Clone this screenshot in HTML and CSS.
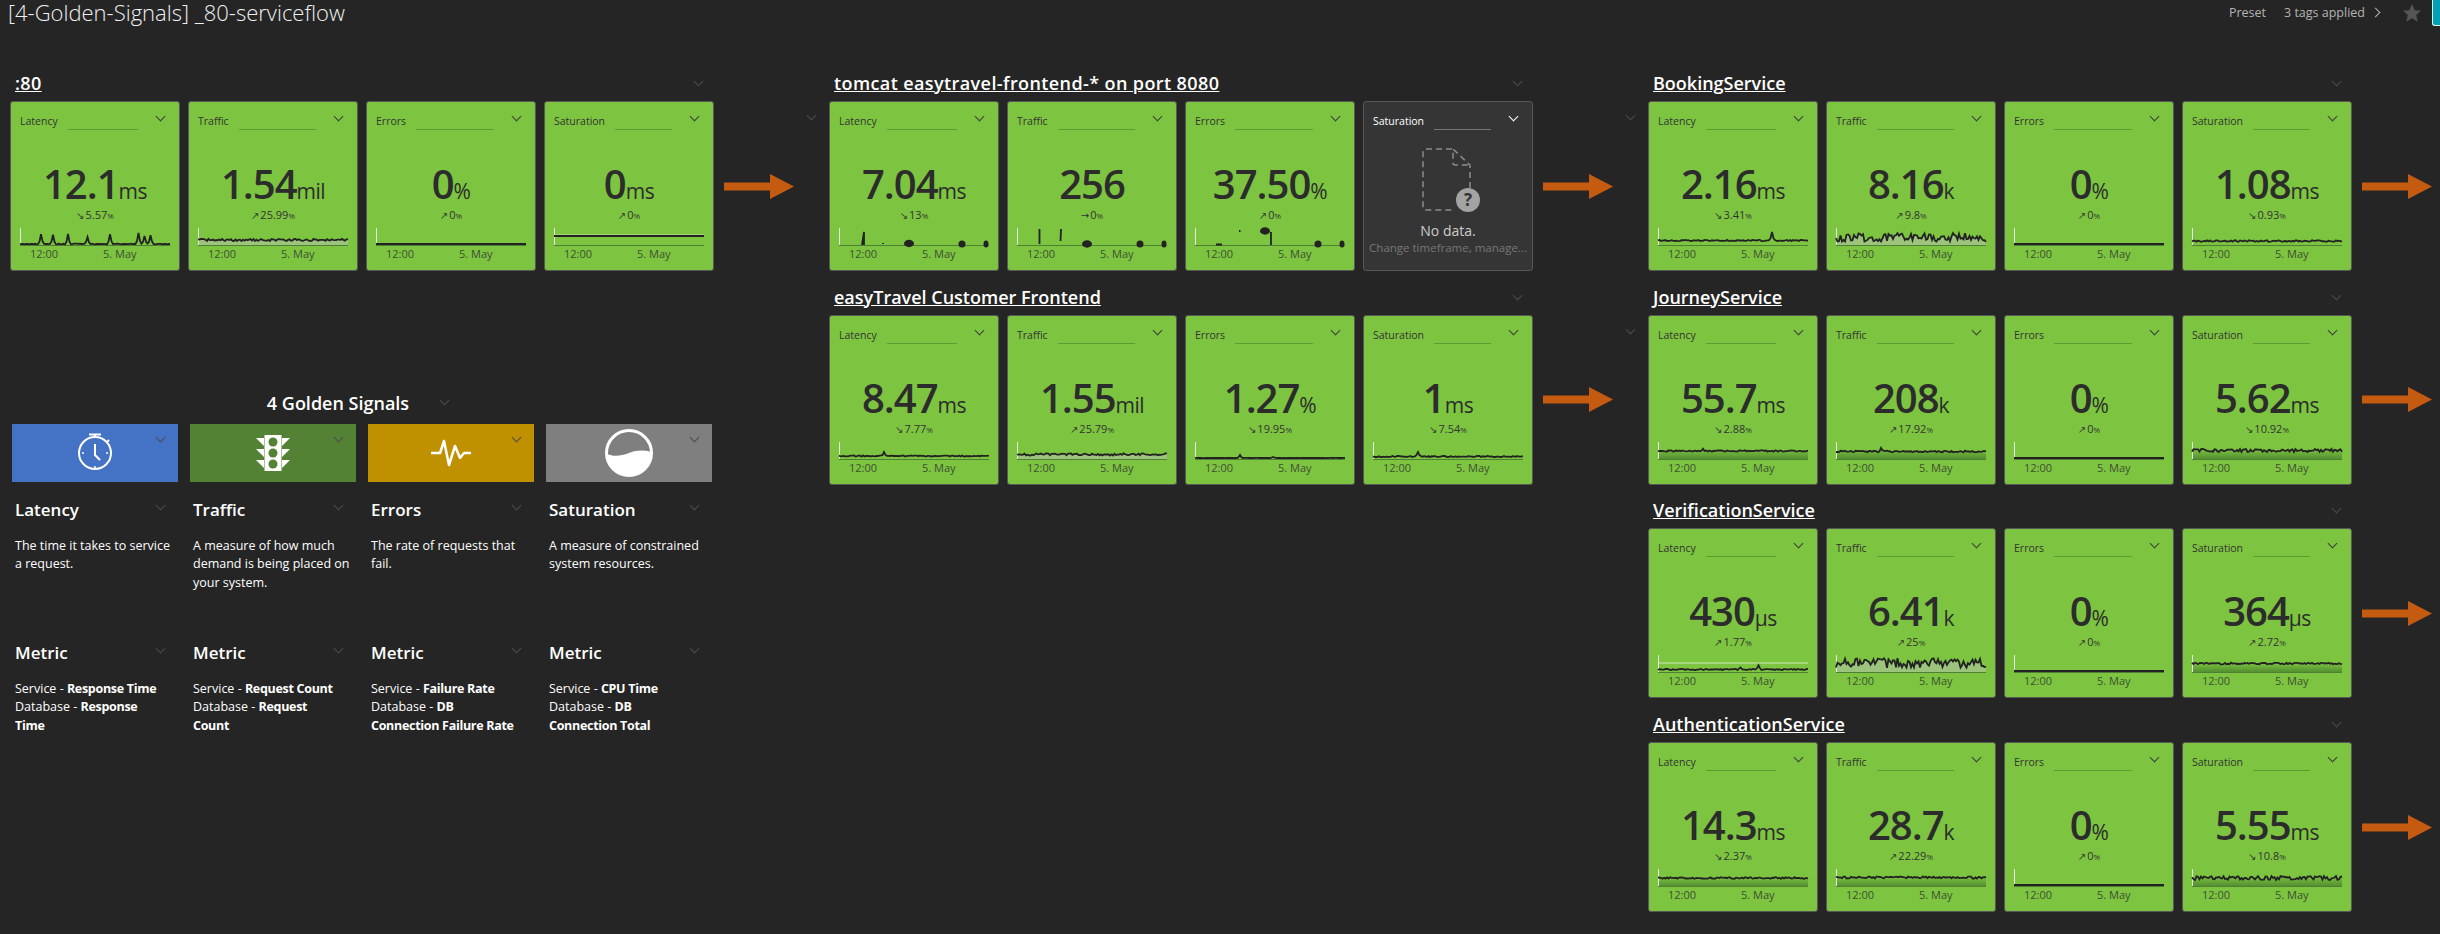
FILE: index.html
```html
<!DOCTYPE html>
<html lang="en">
<head>
    <meta charset="UTF-8">
    <title>[4-Golden-Signals] _80-serviceflow</title>
    <link rel="stylesheet" href="styles.css">
</head>
<body>
    <svg class="defs" width="0" height="0">
        <linearGradient id="shade" x1="0" y1="0" x2="0" y2="1">
            <stop offset="0" stop-color="#7dc540"/>
            <stop offset="1" stop-color="#4f8a30"/>
        </linearGradient>
    </svg>

    <div class="topbar">
        <div class="page-title">[4-Golden-Signals] _80-serviceflow</div>
        <div class="top-right">
            <span>Preset</span>
            <span class="tags">3 tags applied</span>
            <span class="chev-right"></span>
            <svg class="star" viewBox="0 0 20 20"><path d="M10 1l2.7 6.2 6.3.6-4.8 4.3 1.5 6.6L10 15.2l-5.7 3.5 1.5-6.6L1 7.8l6.3-.6z"/></svg>
            <span class="teal"></span>
        </div>
    </div>

    <div class="board">
        <div class="col">
            <div class="group">
                <div class="group-head"><a class="group-title wide">:80</a><span class="chev"></span></div>
                <div class="tiles">
                    <div class="tile">
                        <div class="tile-head"><span>Latency</span><i></i><b class="chev"></b></div>
                        <div class="value">12.1<small>ms</small></div>
                        <div class="delta"><em>↘</em>5.57<small>%</small></div>
                        <svg class="spark" data-level="16" data-amp="0.4" data-seed="3" data-spikes=".14:10,.22:9,.32:10,.45:7,.6:10,.79:11,.83:8,.87:9"></svg>
                        <div class="axis"><span>12:00</span><span>5. May</span></div>
                    </div>
                    <div class="tile">
                        <div class="tile-head"><span>Traffic</span><i></i><b class="chev"></b></div>
                        <div class="value">1.54<small>mil</small></div>
                        <div class="delta"><em>↗</em>25.99<small>%</small></div>
                        <svg class="spark" data-level="12" data-amp="1.1" data-seed="11" data-fill="#9cc47c"></svg>
                        <div class="axis"><span>12:00</span><span>5. May</span></div>
                    </div>
                    <div class="tile">
                        <div class="tile-head"><span>Errors</span><i></i><b class="chev"></b></div>
                        <div class="value">0<small>%</small></div>
                        <div class="delta"><em>↗</em>0<small>%</small></div>
                        <svg class="spark" data-level="16" data-amp="0" data-seed="1" data-fill="#e6e6e6"></svg>
                        <div class="axis"><span>12:00</span><span>5. May</span></div>
                    </div>
                    <div class="tile">
                        <div class="tile-head"><span>Saturation</span><i></i><b class="chev"></b></div>
                        <div class="value">0<small>ms</small></div>
                        <div class="delta"><em>↗</em>0<small>%</small></div>
                        <svg class="spark" data-level="8" data-amp="0" data-seed="1" data-cap="7"></svg>
                        <div class="axis"><span>12:00</span><span>5. May</span></div>
                    </div>
                    <div class="flow"><svg class="arrow" viewBox="0 0 70 25"><path d="M0 8.500h46V0l24 12.500L46 25v-8.500H0z"/></svg><span class="chev"></span></div>
                </div>
            </div>

            <div class="signals-head"><span>4 Golden Signals</span><b class="chev"></b></div>
            <div class="signals">
                <div class="signal">
                    <div class="banner banner-blue">
                        <svg viewBox="0 0 60 58" class="banner-icon">
                            <circle cx="30" cy="29" r="16" fill="none" stroke="#fff" stroke-width="2"/>
                            <path d="M24 10.500h12M30 10.500v3M41.500 18.500l2.500-2.500M30 20v11l5 5" fill="none" stroke="#fff" stroke-width="2"/>
                            <path d="M30 42v2M19 29h-2M41 29h2" stroke="#fff" stroke-width="1.500"/>
                        </svg>
                        <span class="chev"></span>
                    </div>
                    <div class="signal-title">Latency<span class="chev"></span></div>
                    <p class="signal-text">The time it takes to service a request.</p>
                    <div class="signal-title">Metric<span class="chev"></span></div>
                    <p class="signal-metric">Service - <b>Response Time</b><br>Database - <b>Response<br>Time</b></p>
                </div>
                <div class="signal">
                    <div class="banner banner-green">
                        <svg viewBox="0 0 60 58" class="banner-icon">
                            <path fill="#fff" d="M21.500 11h17v36h-17zM13 14h8v8zM47 14h-8v8zM13 25h8v8zM47 25h-8v8zM13 36h8v8zM47 36h-8v8z"/>
                            <circle cx="30" cy="18" r="4.500" fill="#548235"/>
                            <circle cx="30" cy="29" r="4.500" fill="#548235"/>
                            <circle cx="30" cy="40" r="4.500" fill="#548235"/>
                        </svg>
                        <span class="chev"></span>
                    </div>
                    <div class="signal-title">Traffic<span class="chev"></span></div>
                    <p class="signal-text">A measure of how much demand is being placed on your system.</p>
                    <div class="signal-title">Metric<span class="chev"></span></div>
                    <p class="signal-metric">Service - <b>Request Count</b><br>Database - <b>Request<br>Count</b></p>
                </div>
                <div class="signal">
                    <div class="banner banner-gold">
                        <svg viewBox="0 0 60 58" class="banner-icon">
                            <path d="M10 29h9l4-12 5 24 6-19 5 12 4-5h7" fill="none" stroke="#fff" stroke-width="2.500" stroke-linejoin="round"/>
                        </svg>
                        <span class="chev"></span>
                    </div>
                    <div class="signal-title">Errors<span class="chev"></span></div>
                    <p class="signal-text">The rate of requests that fail.</p>
                    <div class="signal-title">Metric<span class="chev"></span></div>
                    <p class="signal-metric">Service - <b>Failure Rate</b><br>Database - <b>DB<br>Connection Failure Rate</b></p>
                </div>
                <div class="signal">
                    <div class="banner banner-grey">
                        <svg viewBox="0 0 60 58" class="banner-icon">
                            <circle cx="30" cy="29" r="22.500" fill="none" stroke="#fff" stroke-width="3"/>
                            <path fill="#fff" d="M8 30c7 3 14 2 22-1s15-3 22-1c0 14-10 24-22 24S8 42 8 30z"/>
                        </svg>
                        <span class="chev"></span>
                    </div>
                    <div class="signal-title">Saturation<span class="chev"></span></div>
                    <p class="signal-text">A measure of constrained system resources.</p>
                    <div class="signal-title">Metric<span class="chev"></span></div>
                    <p class="signal-metric">Service - <b>CPU Time</b><br>Database - <b>DB<br>Connection Total</b></p>
                </div>
            </div>
        </div>

        <div class="col">
            <div class="group">
                <div class="group-head"><a class="group-title wide">tomcat easytravel-frontend-* on port 8080</a><span class="chev"></span></div>
                <div class="tiles">
                    <div class="tile">
                        <div class="tile-head"><span>Latency</span><i></i><b class="chev"></b></div>
                        <div class="value">7.04<small>ms</small></div>
                        <div class="delta"><em>↘</em>13<small>%</small></div>
                        <svg class="spark" viewBox="0 0 150 18">
                            <path class="spark-tick" d="M.5 0v17"/><path class="spark-base" d="M0 17.500h150"/>
                            <path class="spark-line" d="M23 17l2-13v13M44 15v1"/>
                            <ellipse cx="70" cy="15.500" rx="5" ry="3.700"/><ellipse cx="123" cy="16" rx="3.500" ry="3.500"/><ellipse cx="147" cy="16" rx="2.500" ry="3.500"/>
                        </svg>
                        <div class="axis"><span>12:00</span><span>5. May</span></div>
                    </div>
                    <div class="tile">
                        <div class="tile-head"><span>Traffic</span><i></i><b class="chev"></b></div>
                        <div class="value">256</div>
                        <div class="delta"><em>→</em>0<small>%</small></div>
                        <svg class="spark" viewBox="0 0 150 18">
                            <path class="spark-tick" d="M.5 0v17"/><path class="spark-base" d="M0 17.500h150"/>
                            <path class="spark-line" d="M22.500 1v15M44 1l-.5 12"/>
                            <ellipse cx="70" cy="16" rx="5" ry="3.700"/><ellipse cx="123" cy="16" rx="3.500" ry="3.500"/><ellipse cx="147" cy="16" rx="2.500" ry="3.500"/>
                        </svg>
                        <div class="axis"><span>12:00</span><span>5. May</span></div>
                    </div>
                    <div class="tile">
                        <div class="tile-head"><span>Errors</span><i></i><b class="chev"></b></div>
                        <div class="value">37.50<small>%</small></div>
                        <div class="delta"><em>↗</em>0<small>%</small></div>
                        <svg class="spark" viewBox="0 0 150 18">
                            <path class="spark-tick" d="M.5 0v17"/><path class="spark-base" d="M0 17.500h150"/>
                            <path class="spark-line" d="M21 16.500h6M76 4v13M44 3h1.500"/>
                            <ellipse cx="70" cy="3" rx="5" ry="3.700"/><ellipse cx="123" cy="16" rx="3.500" ry="3.500"/><ellipse cx="147" cy="16" rx="2.500" ry="3.500"/>
                        </svg>
                        <div class="axis"><span>12:00</span><span>5. May</span></div>
                    </div>
                    <div class="tile tile-empty">
                        <div class="tile-head"><span>Saturation</span><i></i><b class="chev"></b></div>
                        <svg class="nodata-icon" viewBox="0 0 62 66">
                            <path d="M31 3H4a2 2 0 0 0-2 2v57a2 2 0 0 0 2 2h30M49 52V19L32 3v14a2 2 0 0 0 2 2h15" fill="none" stroke="#8c8c8c" stroke-width="1.500" stroke-dasharray="6 4"/>
                            <circle cx="47" cy="54" r="12" fill="#a3a3a3"/>
                            <text x="47" y="60" text-anchor="middle" class="nodata-q">?</text>
                        </svg>
                        <div class="nodata-title">No data.</div>
                        <div class="nodata-hint">Change timeframe, manage...</div>
                    </div>
                    <div class="flow"><svg class="arrow" viewBox="0 0 70 25"><path d="M0 8.500h46V0l24 12.500L46 25v-8.500H0z"/></svg><span class="chev"></span></div>
                </div>
            </div>
            <div class="group">
                <div class="group-head"><a class="group-title">easyTravel Customer Frontend</a><span class="chev"></span></div>
                <div class="tiles">
                    <div class="tile">
                        <div class="tile-head"><span>Latency</span><i></i><b class="chev"></b></div>
                        <div class="value">8.47<small>ms</small></div>
                        <div class="delta"><em>↘</em>7.77<small>%</small></div>
                        <svg class="spark" data-level="14" data-amp="0.6" data-seed="5" data-spikes=".3:4"></svg>
                        <div class="axis"><span>12:00</span><span>5. May</span></div>
                    </div>
                    <div class="tile">
                        <div class="tile-head"><span>Traffic</span><i></i><b class="chev"></b></div>
                        <div class="value">1.55<small>mil</small></div>
                        <div class="delta"><em>↗</em>25.79<small>%</small></div>
                        <svg class="spark" data-level="12.500" data-amp="1.100" data-seed="17" data-fill="#9cc47c"></svg>
                        <div class="axis"><span>12:00</span><span>5. May</span></div>
                    </div>
                    <div class="tile">
                        <div class="tile-head"><span>Errors</span><i></i><b class="chev"></b></div>
                        <div class="value">1.27<small>%</small></div>
                        <div class="delta"><em>↘</em>19.95<small>%</small></div>
                        <svg class="spark" data-level="16" data-amp="0.1" data-seed="2" data-spikes=".3:3,.52:1"></svg>
                        <div class="axis"><span>12:00</span><span>5. May</span></div>
                    </div>
                    <div class="tile">
                        <div class="tile-head"><span>Saturation</span><i></i><b class="chev"></b></div>
                        <div class="value">1<small>ms</small></div>
                        <div class="delta"><em>↘</em>7.54<small>%</small></div>
                        <svg class="spark" data-level="14.500" data-amp="0.6" data-seed="7" data-spikes=".3:4"></svg>
                        <div class="axis"><span>12:00</span><span>5. May</span></div>
                    </div>
                    <div class="flow"><svg class="arrow" viewBox="0 0 70 25"><path d="M0 8.500h46V0l24 12.500L46 25v-8.500H0z"/></svg><span class="chev"></span></div>
                </div>
            </div>
        </div>

        <div class="col">
            <div class="group">
                <div class="group-head"><a class="group-title">BookingService</a><span class="chev"></span></div>
                <div class="tiles">
                    <div class="tile">
                        <div class="tile-head"><span>Latency</span><i></i><b class="chev"></b></div>
                        <div class="value">2.16<small>ms</small></div>
                        <div class="delta"><em>↘</em>3.41<small>%</small></div>
                        <svg class="spark" data-level="12.500" data-amp="0.6" data-seed="9" data-spikes=".76:9"></svg>
                        <div class="axis"><span>12:00</span><span>5. May</span></div>
                    </div>
                    <div class="tile">
                        <div class="tile-head"><span>Traffic</span><i></i><b class="chev"></b></div>
                        <div class="value">8.16<small>k</small></div>
                        <div class="delta"><em>↗</em>9.8<small>%</small></div>
                        <svg class="spark" data-level="9.500" data-amp="4.500" data-seed="23" data-fill="#9cc47c"></svg>
                        <div class="axis"><span>12:00</span><span>5. May</span></div>
                    </div>
                    <div class="tile">
                        <div class="tile-head"><span>Errors</span><i></i><b class="chev"></b></div>
                        <div class="value">0<small>%</small></div>
                        <div class="delta"><em>↗</em>0<small>%</small></div>
                        <svg class="spark" data-level="16" data-amp="0" data-seed="1" data-fill="#e6e6e6"></svg>
                        <div class="axis"><span>12:00</span><span>5. May</span></div>
                    </div>
                    <div class="tile">
                        <div class="tile-head"><span>Saturation</span><i></i><b class="chev"></b></div>
                        <div class="value">1.08<small>ms</small></div>
                        <div class="delta"><em>↘</em>0.93<small>%</small></div>
                        <svg class="spark" data-level="13" data-amp="0.8" data-seed="29"></svg>
                        <div class="axis"><span>12:00</span><span>5. May</span></div>
                    </div>
                    <div class="flow"><svg class="arrow" viewBox="0 0 70 25"><path d="M0 8.500h46V0l24 12.500L46 25v-8.500H0z"/></svg><span class="chev"></span></div>
                </div>
            </div>
            <div class="group">
                <div class="group-head"><a class="group-title">JourneyService</a><span class="chev"></span></div>
                <div class="tiles">
                    <div class="tile">
                        <div class="tile-head"><span>Latency</span><i></i><b class="chev"></b></div>
                        <div class="value">55.7<small>ms</small></div>
                        <div class="delta"><em>↘</em>2.88<small>%</small></div>
                        <svg class="spark" data-level="9" data-amp="0.7" data-seed="31" data-fill="url(#shade)" data-spikes=".3:2"></svg>
                        <div class="axis"><span>12:00</span><span>5. May</span></div>
                    </div>
                    <div class="tile">
                        <div class="tile-head"><span>Traffic</span><i></i><b class="chev"></b></div>
                        <div class="value">208<small>k</small></div>
                        <div class="delta"><em>↗</em>17.92<small>%</small></div>
                        <svg class="spark" data-level="9.500" data-amp="0.8" data-seed="37" data-fill="url(#shade)" data-spikes=".3:3"></svg>
                        <div class="axis"><span>12:00</span><span>5. May</span></div>
                    </div>
                    <div class="tile">
                        <div class="tile-head"><span>Errors</span><i></i><b class="chev"></b></div>
                        <div class="value">0<small>%</small></div>
                        <div class="delta"><em>↗</em>0<small>%</small></div>
                        <svg class="spark" data-level="16" data-amp="0" data-seed="1" data-fill="#e6e6e6"></svg>
                        <div class="axis"><span>12:00</span><span>5. May</span></div>
                    </div>
                    <div class="tile">
                        <div class="tile-head"><span>Saturation</span><i></i><b class="chev"></b></div>
                        <div class="value">5.62<small>ms</small></div>
                        <div class="delta"><em>↘</em>10.92<small>%</small></div>
                        <svg class="spark" data-level="8.500" data-amp="1.600" data-seed="41" data-fill="url(#shade)"></svg>
                        <div class="axis"><span>12:00</span><span>5. May</span></div>
                    </div>
                    <div class="flow"><svg class="arrow" viewBox="0 0 70 25"><path d="M0 8.500h46V0l24 12.500L46 25v-8.500H0z"/></svg><span class="chev"></span></div>
                </div>
            </div>
            <div class="group">
                <div class="group-head"><a class="group-title">VerificationService</a><span class="chev"></span></div>
                <div class="tiles">
                    <div class="tile">
                        <div class="tile-head"><span>Latency</span><i></i><b class="chev"></b></div>
                        <div class="value">430<small>µs</small></div>
                        <div class="delta"><em>↗</em>1.77<small>%</small></div>
                        <svg class="spark" data-level="14.500" data-amp="0.6" data-seed="43" data-cap="8" data-spikes=".55:2,.67:4"></svg>
                        <div class="axis"><span>12:00</span><span>5. May</span></div>
                    </div>
                    <div class="tile">
                        <div class="tile-head"><span>Traffic</span><i></i><b class="chev"></b></div>
                        <div class="value">6.41<small>k</small></div>
                        <div class="delta"><em>↗</em>25<small>%</small></div>
                        <svg class="spark" data-level="8" data-amp="4.800" data-seed="47" data-fill="#9cc47c"></svg>
                        <div class="axis"><span>12:00</span><span>5. May</span></div>
                    </div>
                    <div class="tile">
                        <div class="tile-head"><span>Errors</span><i></i><b class="chev"></b></div>
                        <div class="value">0<small>%</small></div>
                        <div class="delta"><em>↗</em>0<small>%</small></div>
                        <svg class="spark" data-level="16" data-amp="0" data-seed="1" data-fill="#e6e6e6"></svg>
                        <div class="axis"><span>12:00</span><span>5. May</span></div>
                    </div>
                    <div class="tile">
                        <div class="tile-head"><span>Saturation</span><i></i><b class="chev"></b></div>
                        <div class="value">364<small>µs</small></div>
                        <div class="delta"><em>↗</em>2.72<small>%</small></div>
                        <svg class="spark" data-level="8.500" data-amp="0.8" data-seed="53" data-fill="url(#shade)"></svg>
                        <div class="axis"><span>12:00</span><span>5. May</span></div>
                    </div>
                    <div class="flow"><svg class="arrow" viewBox="0 0 70 25"><path d="M0 8.500h46V0l24 12.500L46 25v-8.500H0z"/></svg><span class="chev"></span></div>
                </div>
            </div>
            <div class="group">
                <div class="group-head"><a class="group-title">AuthenticationService</a><span class="chev"></span></div>
                <div class="tiles">
                    <div class="tile">
                        <div class="tile-head"><span>Latency</span><i></i><b class="chev"></b></div>
                        <div class="value">14.3<small>ms</small></div>
                        <div class="delta"><em>↘</em>2.37<small>%</small></div>
                        <svg class="spark" data-level="9" data-amp="0.8" data-seed="59" data-fill="url(#shade)"></svg>
                        <div class="axis"><span>12:00</span><span>5. May</span></div>
                    </div>
                    <div class="tile">
                        <div class="tile-head"><span>Traffic</span><i></i><b class="chev"></b></div>
                        <div class="value">28.7<small>k</small></div>
                        <div class="delta"><em>↗</em>22.29<small>%</small></div>
                        <svg class="spark" data-level="8.500" data-amp="1" data-seed="61" data-fill="url(#shade)"></svg>
                        <div class="axis"><span>12:00</span><span>5. May</span></div>
                    </div>
                    <div class="tile">
                        <div class="tile-head"><span>Errors</span><i></i><b class="chev"></b></div>
                        <div class="value">0<small>%</small></div>
                        <div class="delta"><em>↗</em>0<small>%</small></div>
                        <svg class="spark" data-level="16" data-amp="0" data-seed="1" data-fill="#d9d9d9"></svg>
                        <div class="axis"><span>12:00</span><span>5. May</span></div>
                    </div>
                    <div class="tile">
                        <div class="tile-head"><span>Saturation</span><i></i><b class="chev"></b></div>
                        <div class="value">5.55<small>ms</small></div>
                        <div class="delta"><em>↘</em>10.8<small>%</small></div>
                        <svg class="spark" data-level="9" data-amp="2" data-seed="67" data-fill="url(#shade)"></svg>
                        <div class="axis"><span>12:00</span><span>5. May</span></div>
                    </div>
                    <div class="flow"><svg class="arrow" viewBox="0 0 70 25"><path d="M0 8.500h46V0l24 12.500L46 25v-8.500H0z"/></svg><span class="chev"></span></div>
                </div>
            </div>
        </div>
    </div>

    <script src="charts.js"></script>
</body>
</html>
```

FILE: styles.css
```css
* {
    box-sizing: border-box;
}
body {
    margin: 0;
    height: 934px;
    overflow: hidden;
    background-color: #252525;
    color: #fff;
    font-family: "Open Sans", "Noto Sans", sans-serif;
}
.defs {
    position: absolute;
}

/* top bar */
.topbar {
    display: flex;
    justify-content: space-between;
    height: 27px;
    padding-left: 8px;
}
.page-title {
    font-size: 22px;
    font-weight: 300;
    line-height: 25px;
    color: #f0f0f0;
}
.top-right {
    display: flex;
    align-items: flex-start;
    font-size: 12.500px;
    line-height: 25px;
    color: #b4b4b4;
}
.tags {
    margin-left: 18px;
}
.chev-right {
    width: 7px;
    height: 7px;
    margin: 9px 0 0 7px;
    border-top: 1px solid #b4b4b4;
    border-right: 1px solid #b4b4b4;
    transform: rotate(45deg);
}
.star {
    width: 20px;
    height: 20px;
    margin: 3px 0 0 23px;
    fill: #555;
}
.teal {
    width: 8px;
    height: 26px;
    margin-left: 10px;
    background-color: #00a1b2;
    border-left: 1px solid #dff;
    border-bottom: 1px solid #dff;
    border-bottom-left-radius: 3px;
}

/* columns */
.board {
    display: grid;
    grid-template-columns: 819px 819px 1fr;
    padding: 30px 0 0 10px;
}
.group {
    height: 213.700px;
}
.group-head {
    position: relative;
    display: flex;
    align-items: flex-end;
    height: 44px;
    padding: 0 0 6px 5px;
}
.group-title {
    font-size: 18px;
    font-weight: 600;
    line-height: 24px;
    text-decoration: underline;
    color: #fff;
}
.group-title.wide {
    letter-spacing: .4px;
}
.group-head .chev {
    left: 685px;
    top: 21px;
}

/* chevron */
.chev {
    position: absolute;
    display: block;
    width: 7px;
    height: 7px;
    border-right: 1px solid #4d4d4d;
    border-bottom: 1px solid #4d4d4d;
    transform: rotate(45deg);
}

/* tiles */
.tiles {
    display: flex;
    gap: 8px;
}
.tile {
    position: relative;
    display: flex;
    flex-direction: column;
    width: 170px;
    height: 170px;
    padding: 0 9px;
    background-color: #7dc540;
    border: 1px solid #575757;
    border-radius: 3px;
    color: #2c2c2c;
}
.tile-head {
    display: flex;
    height: 28px;
    padding: 12px 32px 0 0;
    font-size: 10.500px;
    line-height: 15px;
    color: #333;
}
.tile-head i {
    flex: 1;
    height: 16px;
    margin-left: 10px;
    border-bottom: 1px solid #5e9b34;
}
.tile-head .chev {
    right: 15px;
    top: 11px;
    border-color: #3d3d3d;
}
.value {
    margin-top: 32px;
    font-size: 40px;
    font-weight: 600;
    line-height: 44px;
    text-align: center;
    letter-spacing: -1px;
}
.value small {
    font-size: 21px;
    font-weight: 400;
    line-height: 0;
    letter-spacing: -.5px;
}
.delta {
    margin-top: 1px;
    font-size: 11px;
    line-height: 15px;
    text-align: center;
    color: #333;
}
.delta em {
    margin-right: 1px;
    font-family: "DejaVu Sans", sans-serif;
    font-style: normal;
    font-size: 10px;
    line-height: 0;
}
.delta small {
    font-size: 8px;
    line-height: 0;
}
.spark {
    flex: none;
    width: 150px;
    height: 18px;
    margin-top: 6px;
    overflow: visible;
}
.spark ellipse {
    fill: #222;
}
.spark-tick {
    stroke: #e6e6e6;
    stroke-width: 1;
    fill: none;
}
.spark-base {
    stroke: #4f7f35;
    stroke-width: 1;
}
.spark-line {
    fill: none;
    stroke: #222;
    stroke-width: 1.800;
}
.spark-cap {
    stroke: #cfe6bd;
    stroke-width: 1;
}
.axis {
    display: flex;
    padding-left: 10px;
    font-size: 11px;
    line-height: 15px;
    color: #3d4f33;
}
.axis span:first-child {
    width: 73px;
}

/* no data */
.tile-empty {
    align-items: center;
    background-color: #353535;
    color: #ccc;
}
.tile-empty .tile-head {
    align-self: stretch;
    color: #fff;
}
.tile-empty .tile-head i {
    border-color: #777;
}
.tile-empty .tile-head .chev {
    border-color: #fff;
}
.nodata-icon {
    width: 62px;
    height: 66px;
    margin: 16px 0 0 8px;
}
.nodata-q {
    font-size: 17px;
    font-weight: 700;
    fill: #333;
}
.nodata-title {
    margin-top: 9px;
    font-size: 14px;
    line-height: 19px;
}
.nodata-hint {
    font-size: 11.500px;
    line-height: 16px;
    white-space: nowrap;
    color: #777;
}

/* arrows between tiles */
.flow {
    position: relative;
    display: flex;
    align-items: center;
    width: 70px;
    margin-left: 2px;
}
.flow .chev {
    left: 84px;
    top: 11px;
}
.arrow {
    width: 70px;
    height: 25px;
    fill: #c55a11;
}

/* golden signals */
.signals-head {
    position: relative;
    display: flex;
    justify-content: center;
    width: 656px;
    margin: 120.300px 0 0 0;
    padding-bottom: 9px;
    font-size: 18px;
    font-weight: 600;
    line-height: 24px;
}
.signals-head .chev {
    left: 431px;
    top: 6px;
}
.signals {
    display: grid;
    grid-template-columns: repeat(4, 170px);
    gap: 8px;
}
.signal {
    position: relative;
}
.banner {
    display: flex;
    justify-content: center;
    height: 58px;
    margin: 0 2px;
}
.banner .chev {
    left: 147px;
    top: 10px;
}
.banner-icon {
    width: 60px;
    height: 58px;
}
.banner-blue {
    background-color: #4472c4;
}
.banner-green {
    background-color: #548235;
}
.banner-gold {
    background-color: #bf9000;
}
.banner-grey {
    background-color: #7f7f7f;
}
.signal-title {
    position: relative;
    padding-left: 5px;
    margin-top: 16px;
    font-size: 17px;
    font-weight: 600;
    line-height: 24px;
}
.signal-title .chev {
    left: 147px;
    top: 4px;
}
.signal-text,
.signal-metric {
    margin: 15px 0 0 0;
    padding-left: 5px;
    font-size: 12.500px;
    line-height: 18.500px;
}
.signal-text {
    height: 88px;
}
.signal-metric {
    white-space: nowrap;
}
.signal-metric b {
    font-weight: 700;
    letter-spacing: -.3px;
}
```

FILE: charts.js
```js
// draws the small trend lines in the tiles, from the data- attributes on each svg
var NS = 'http://www.w3.org/2000/svg';

function add(svg, tag, attrs) {
    var el = document.createElementNS(NS, tag);
    for (var k in attrs) el.setAttribute(k, attrs[k]);
    svg.appendChild(el);
}

document.querySelectorAll('.spark[data-level]').forEach(function (svg) {
    var level = parseFloat(svg.dataset.level);
    var amp = parseFloat(svg.dataset.amp);
    var seed = parseInt(svg.dataset.seed, 10);
    var spikes = (svg.dataset.spikes || '').split(',').filter(Boolean).map(function (s) {
        var p = s.split(':');
        return { at: parseFloat(p[0]) * 150, h: parseFloat(p[1]) };
    });

    var pts = [];
    for (var x = 0; x <= 150; x += 1.5) {
        seed = (seed * 1103 + 12345) % 65536;
        var y = level + (seed / 65536 - 0.5) * 2 * amp;
        spikes.forEach(function (sp) {
            var d = Math.abs(x - sp.at);
            if (d < 2) y -= sp.h * (1 - d / 2);
        });
        pts.push(x + ',' + Math.max(0, Math.min(17, y)).toFixed(1));
    }

    svg.setAttribute('viewBox', '0 0 150 18');
    if (svg.dataset.fill) {
        add(svg, 'polygon', { points: '0,18 ' + pts.join(' ') + ' 150,18', fill: svg.dataset.fill });
    }
    if (svg.dataset.cap) {
        add(svg, 'path', { d: 'M0 ' + svg.dataset.cap + 'h150', 'class': 'spark-cap' });
    }
    add(svg, 'path', { d: 'M.5 0v17', 'class': 'spark-tick' });
    add(svg, 'path', { d: 'M0 17.5h150', 'class': 'spark-base' });
    add(svg, 'polyline', { points: pts.join(' '), 'class': 'spark-line' });
});
```
